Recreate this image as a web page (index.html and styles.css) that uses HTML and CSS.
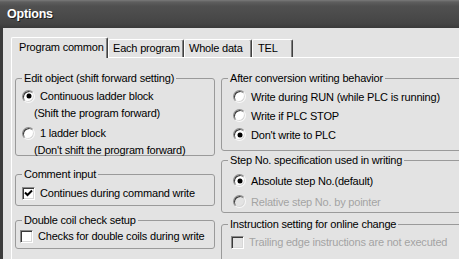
FILE: index.html
```html
<!DOCTYPE html>
<html>
<head>
<meta charset="utf-8">
<link rel="stylesheet" href="styles.css">
</head>
<body>
<div class="window">
  <div class="titlebar"><span class="title">Options</span></div>
  <div class="client">
    <div class="tabs">
      <div class="tab tab-active">Program common</div>
      <div class="tab tab-each">Each program</div>
      <div class="tab tab-whole">Whole data</div>
      <div class="tab tab-tel">TEL</div>
    </div>
    <div class="panel">
      <div class="col col-left">
        <fieldset class="group g-edit">
          <legend>Edit object (shift forward setting)</legend>
          <div class="opt"><span class="radio on"></span>Continuous ladder block</div>
          <div class="sub">(Shift the program forward)</div>
          <div class="opt opt-gap"><span class="radio"></span>1 ladder block</div>
          <div class="sub">(Don't shift the program forward)</div>
        </fieldset>
        <fieldset class="group g-comment">
          <legend>Comment input</legend>
          <div class="opt"><span class="check on"><svg width="9" height="9" viewBox="0 0 9 9"><path d="M1 3.5 L3.5 6 L8 1.5" fill="none" stroke="#000" stroke-width="2"/></svg></span>Continues during command write</div>
        </fieldset>
        <fieldset class="group g-double">
          <legend>Double coil check setup</legend>
          <div class="opt opt-double"><span class="check"></span>Checks for double coils during write</div>
        </fieldset>
      </div>
      <div class="col col-right">
        <fieldset class="group g-after">
          <legend>After conversion writing behavior</legend>
          <div class="opt ropt"><span class="radio"></span>Write during RUN (while PLC is running)</div>
          <div class="opt ropt"><span class="radio"></span>Write if PLC STOP</div>
          <div class="opt ropt"><span class="radio on"></span>Don't write to PLC</div>
        </fieldset>
        <fieldset class="group g-step">
          <legend>Step No. specification used in writing</legend>
          <div class="opt ropt"><span class="radio on"></span>Absolute step No.(default)</div>
          <div class="opt ropt disabled"><span class="radio"></span>Relative step No. by pointer</div>
        </fieldset>
        <fieldset class="group g-instr">
          <legend>Instruction setting for online change</legend>
          <div class="opt ropt disabled"><span class="check"></span>Trailing edge instructions are not executed</div>
        </fieldset>
      </div>
    </div>
  </div>
</div>
</body>
</html>
```
FILE: styles.css
```css
* { box-sizing: border-box; }
html, body { margin: 0; padding: 0; background: #e3e3e3; }
body { width: 459px; height: 259px; overflow: hidden; }

.window {
  width: 459px;
  height: 259px;
  overflow: hidden;
  background: #e3e3e3;
  font-family: "Liberation Sans", Arial, sans-serif;
  font-size: 11px;
  letter-spacing: -0.2px;
  color: #000;
}

.titlebar {
  height: 28px;
  background: linear-gradient(to bottom, #7a7a7a 0px, #5e5e5e 2px, #505050 6px, #4a4a4a 16px, #444 24px, #3a3a3a 28px);
  display: flex;
  align-items: center;
  padding-left: 7px;
  padding-bottom: 1px;
}
.title {
  color: #fff;
  font-weight: bold;
  font-size: 12.5px;
  letter-spacing: -0.2px;
  text-shadow: 1px 1px 0 #1e1e1e;
}

.client {
  border-left: 3px solid #3c3c3c;
  height: 231px;
  padding-top: 9px;
  padding-left: 8px;
}

.tabs {
  display: flex;
  align-items: flex-end;
  height: 20px;
}
.tab {
  height: 18px;
  line-height: 16px;
  border-top: 1px solid #fff;
  border-left: 1px solid #fff;
  border-right: 1px solid #404040;
  box-shadow: inset -1px 0 0 #808080;
  border-radius: 2px 2px 0 0;
  padding-left: 3px;
  white-space: nowrap;
}
.tab-active {
  position: relative;
  z-index: 1;
  height: 21px;
  margin-bottom: -1px;
  line-height: 18px;
  width: 97px;
  padding-left: 7px;
  background: #e3e3e3;
}
.tab-each { width: 76px; padding-left: 4px; }
.tab-whole { width: 68px; padding-left: 4px; }
.tab-tel { width: 41px; padding-left: 5px; }

.panel {
  width: 520px;
  height: 220px;
  border-top: 1px solid #fff;
  border-left: 1px solid #fff;
  padding-top: 14px;
  padding-left: 3px;
  display: flex;
  gap: 6px;
}
.col { display: flex; flex-direction: column; }
.col-left { width: 200px; }
.col-right { width: 280px; }

.group {
  margin: 0;
  border: 1px solid #9a9a9a;
  border-radius: 3px;
  padding: 0 0 0 6px;
  min-inline-size: 0;
}
.group legend {
  padding: 0 2px;
  margin-left: 0;
  line-height: 13px;
  height: 13px;
}

.opt {
  display: flex;
  align-items: center;
  gap: 5px;
  height: 16px;
  white-space: nowrap;
}
.sub {
  height: 14px;
  line-height: 14px;
  margin-top: 2px;
  padding-left: 12px;
  white-space: nowrap;
}

.g-edit { padding-top: 3px; height: 84px; }
.g-edit .opt-gap { margin-top: 5px; }
.g-comment { margin-top: 12px; padding-top: 4px; padding-bottom: 4px; }
.g-double { margin-top: 8px; padding-top: 1px; padding-bottom: 4px; }
.opt-double { margin-left: -2px; }

.ropt { margin-left: 5px; height: 19px; }
.g-after { padding-top: 2px; padding-bottom: 6px; }
.g-step { margin-top: 3px; padding-top: 3px; }
.g-step .ropt { height: 21px; }
.g-instr { margin-top: 5px; padding-top: 2px; padding-bottom: 10px; }
.g-instr .ropt { height: 18px; margin-left: 3px; }

.disabled { color: #a3a3a3; }

.radio {
  flex: none;
  width: 13px;
  height: 13px;
  border-radius: 50%;
  border: 1px solid;
  border-color: #8a8a8a #f8f8f8 #f8f8f8 #8a8a8a;
  box-shadow: inset 1px 1px 0 #3a3a3a, inset -1px -1px 0 #d8d8d8;
  background: #fff;
  display: flex;
  align-items: center;
  justify-content: center;
}
.radio.on::after {
  content: "";
  width: 4px;
  height: 4px;
  border-radius: 50%;
  background: #000;
  box-shadow: 0 0 0 0.5px #000;
}
.disabled .radio { background: #e3e3e3; }
.disabled .check { background: #e3e3e3; }

.check {
  flex: none;
  width: 13px;
  height: 13px;
  border: 1px solid;
  border-color: #8a8a8a #fff #fff #8a8a8a;
  box-shadow: inset 1px 1px 0 #3a3a3a, inset -1px -1px 0 #d8d8d8;
  background: #fff;
  display: flex;
  align-items: center;
  justify-content: center;
}
.check svg { display: block; }
```
